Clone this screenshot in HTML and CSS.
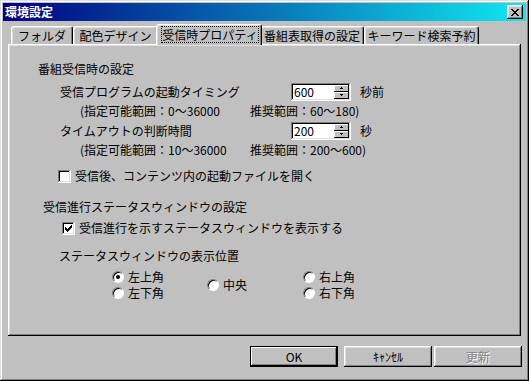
FILE: index.html
```html
<!DOCTYPE html>
<html lang="ja">
<head>
  <meta charset="UTF-8" />
  <title>環境設定</title>
  <link rel="stylesheet" href="styles.css">
</head>
<body>

  <div class="window">
    <div class="titlebar">
      <span class="title">環境設定</span>
      <button class="close-btn">
        <svg width="8" height="7" viewBox="0 0 8 7" shape-rendering="crispEdges"><path fill="#000" d="M0 0h2v1H0z M6 0h2v1H6z M1 1h2v1H1z M5 1h2v1H5z M2 2h4v1H2z M3 3h2v1H3z M2 4h4v1H2z M1 5h2v1H1z M5 5h2v1H5z M0 6h2v1H0z M6 6h2v1H6z"/></svg>
      </button>
    </div>

    <div class="content">
      <!-- Tabs -->
      <div class="tabs">
        <div class="tab tab-folder">フォルダ</div>
        <div class="tab tab-color">配色デザイン</div>
        <div class="tab tab-recv active"><span class="focus">受信時プロパティ</span></div>
        <div class="tab tab-epg">番組表取得の設定</div>
        <div class="tab tab-keyword">キーワード検索予約</div>
      </div>

      <div class="panel">
        <div class="heading heading-recv">番組受信時の設定</div>

        <div class="field field-first">
          <span class="field-label">受信プログラムの起動タイミング</span>
          <div class="spin">
            <span class="spin-value">600</span>
            <div class="spin-btns">
              <span class="spin-btn"><svg width="5" height="3" viewBox="0 0 5 3" shape-rendering="crispEdges"><path fill="#000" d="M2 0h1v1H2z M1 1h3v1H1z"/></svg></span>
              <span class="spin-btn"><svg width="5" height="3" viewBox="0 0 5 3" shape-rendering="crispEdges"><path fill="#000" d="M1 0h3v1H1z M2 1h1v1H2z"/></svg></span>
            </div>
          </div>
          <span class="unit">秒前</span>
        </div>
        <div class="hint">
          <span class="hint-range">(指定可能範囲：0～36000</span>
          <span>推奨範囲：60～180)</span>
        </div>

        <div class="field field-second">
          <span class="field-label">タイムアウトの判断時間</span>
          <div class="spin">
            <span class="spin-value">200</span>
            <div class="spin-btns">
              <span class="spin-btn"><svg width="5" height="3" viewBox="0 0 5 3" shape-rendering="crispEdges"><path fill="#000" d="M2 0h1v1H2z M1 1h3v1H1z"/></svg></span>
              <span class="spin-btn"><svg width="5" height="3" viewBox="0 0 5 3" shape-rendering="crispEdges"><path fill="#000" d="M1 0h3v1H1z M2 1h1v1H2z"/></svg></span>
            </div>
          </div>
          <span class="unit">秒</span>
        </div>
        <div class="hint">
          <span class="hint-range">(指定可能範囲：10～36000</span>
          <span>推奨範囲：200～600)</span>
        </div>

        <label class="check check-open">
          <span class="checkbox"></span>
          <span>受信後、コンテンツ内の起動ファイルを開く</span>
        </label>

        <div class="heading heading-status">受信進行ステータスウィンドウの設定</div>

        <label class="check check-status">
          <span class="checkbox">
            <svg width="7" height="7" viewBox="0 0 7 7" shape-rendering="crispEdges"><path fill="#000" d="M6 0h1v1H6z M5 1h2v1H5z M0 2h1v1H0z M4 2h3v1H4z M0 3h2v1H0z M3 3h3v1H3z M0 4h5v1H0z M1 5h3v1H1z M2 6h1v1H2z"/></svg>
          </span>
          <span>受信進行を示すステータスウィンドウを表示する</span>
        </label>

        <div class="heading heading-pos">ステータスウィンドウの表示位置</div>

        <div class="radios">
          <label class="radio-item"><span class="radio checked"></span>左上角</label>
          <label class="radio-item radio-center"><span class="radio"></span>中央</label>
          <label class="radio-item"><span class="radio"></span>右上角</label>
          <label class="radio-item"><span class="radio"></span>左下角</label>
          <label class="radio-item"><span class="radio"></span>右下角</label>
        </div>
      </div>

      <div class="footer">
        <button class="btn default">OK</button>
        <button class="btn btn-cancel">ｷｬﾝｾﾙ</button>
        <button class="btn btn-apply" disabled>更新</button>
      </div>
    </div>
  </div>

</body>
</html>
```

FILE: styles.css
```css
* {
  box-sizing: border-box;
}
body {
  margin: 0;
  font-family: "Noto Sans CJK JP", sans-serif;
  font-size: 12px;
  line-height: 16px;
  color: #000;
  background: #c0c0c0;
}
.window {
  width: 529px;
  height: 381px;
  padding: 3px;
  background: #c0c0c0;
  box-shadow: inset -1px -1px #000, inset 1px 1px #dfdfdf, inset -2px -2px #808080, inset 2px 2px #fff;
}
.titlebar {
  height: 18px;
  display: flex;
  align-items: center;
  justify-content: space-between;
  padding: 0 3px 0 2px;
  background: linear-gradient(to right, #000080, #10e8f0);
  color: #fff;
}
.title {
  font-weight: bold;
  font-size: 12px;
}
.close-btn {
  width: 16px;
  height: 14px;
  padding: 0;
  border: none;
  background: #c0c0c0;
  display: flex;
  align-items: center;
  justify-content: center;
  box-shadow: inset -1px -1px #000, inset 1px 1px #fff, inset -2px -2px #808080, inset 2px 2px #dfdfdf;
}
.content {
  padding: 3px 5px 0 5px;
}

/* tabs */
.tabs {
  display: flex;
  align-items: flex-end;
  height: 20px;
  padding-left: 3px;
}
.tab {
  height: 18px;
  text-align: center;
  line-height: 17px;
  border-top: 1px solid #fff;
  border-left: 1px solid #fff;
  border-right: 1px solid #000;
  border-radius: 3px 3px 0 0;
  box-shadow: inset -1px 0 #808080, inset 1px 1px #dfdfdf;
}
.tab-folder { width: 62px; }
.tab-color { width: 85px; }
.tab-recv { width: 106px; }
.tab-epg { width: 104px; }
.tab-keyword { width: 115px; }
.tab.active {
  position: relative;
  z-index: 1;
  height: 21px;
  margin: 0 -2px -1px -2px;
  background: #c0c0c0;
  padding: 1px 2px 0 4px;
}
.focus {
  display: block;
  height: 17px;
  line-height: 15px;
  border: 1px dotted #000;
}

/* panel */
.panel {
  height: 292px;
  box-shadow: inset -1px -1px #000, inset 1px 1px #fff, inset -2px -2px #808080, inset 2px 2px #dfdfdf;
  padding-top: 17px;
}
.heading {
  height: 16px;
}
.heading-recv {
  padding-left: 30px;
}
.heading-status {
  margin-top: 15px;
  padding-left: 35px;
}
.heading-pos {
  margin-top: 12px;
  padding-left: 51px;
}
.field {
  display: flex;
  align-items: center;
  height: 18px;
  padding-left: 52px;
}
.field-first {
  margin-top: 6px;
}
.field-second {
  margin-top: 3px;
}
.field-label {
  width: 231px;
}
.spin {
  width: 60px;
  height: 18px;
  display: flex;
  background: #fff;
  padding: 2px;
  box-shadow: inset -1px -1px #fff, inset 1px 1px #808080, inset -2px -2px #dfdfdf, inset 2px 2px #000;
}
.spin-value {
  flex: 1;
  line-height: 14px;
  padding-left: 1px;
}
.spin-btns {
  width: 15px;
  display: flex;
  flex-direction: column;
}
.spin-btn {
  height: 7px;
  display: flex;
  align-items: center;
  justify-content: center;
  background: #c0c0c0;
  box-shadow: inset -1px -1px #000, inset 1px 1px #fff;
}
.unit {
  margin-left: 9px;
}
.hint {
  display: flex;
  height: 16px;
  margin-top: 2px;
  padding-left: 72px;
}
.hint-range {
  width: 170px;
}

/* checkboxes */
.check {
  display: flex;
  align-items: center;
  gap: 4px;
  height: 16px;
}
.check-open {
  margin-top: 10px;
  padding-left: 50px;
}
.check-status {
  margin-top: 5px;
  padding-left: 54px;
}
.checkbox {
  width: 13px;
  height: 13px;
  display: flex;
  align-items: center;
  justify-content: center;
  background: #fff;
  box-shadow: inset -1px -1px #fff, inset 1px 1px #808080, inset -2px -2px #dfdfdf, inset 2px 2px #000;
}

/* radios */
.radios {
  display: grid;
  grid-template-columns: 95px 96px auto;
  grid-template-rows: 16px 16px;
  margin-top: 5px;
  padding-left: 104px;
}
.radio-item {
  display: flex;
  align-items: center;
  gap: 4px;
}
.radio-center {
  grid-row: span 2;
}
.radio {
  width: 12px;
  height: 12px;
  border-radius: 50%;
  background: #fff;
  border: 1px solid;
  border-color: #808080 #fff #fff #808080;
  box-shadow: inset 1px 1px #000;
  display: flex;
  align-items: center;
  justify-content: center;
}
.radio.checked::after {
  content: "";
  width: 4px;
  height: 4px;
  border-radius: 50%;
  background: #000;
}

/* buttons */
.footer {
  display: flex;
  justify-content: flex-end;
  margin-top: 10px;
  margin-right: -1px;
}
.btn {
  width: 88px;
  height: 21px;
  padding: 0;
  border: none;
  font-family: "Noto Sans CJK JP", sans-serif;
  font-size: 12px;
  color: #000;
  background: #c0c0c0;
  box-shadow: inset -1px -1px #000, inset 1px 1px #fff, inset -2px -2px #808080, inset 2px 2px #dfdfdf;
}
.btn.default {
  box-shadow: inset 0 0 0 1px #000, inset -2px -2px #000, inset 2px 2px #fff, inset -3px -3px #808080;
}
.btn-cancel {
  margin-left: 6px;
}
.btn-apply {
  margin-left: 2px;
}
.btn:disabled {
  color: #808080;
  text-shadow: 1px 1px #fff;
}
```
